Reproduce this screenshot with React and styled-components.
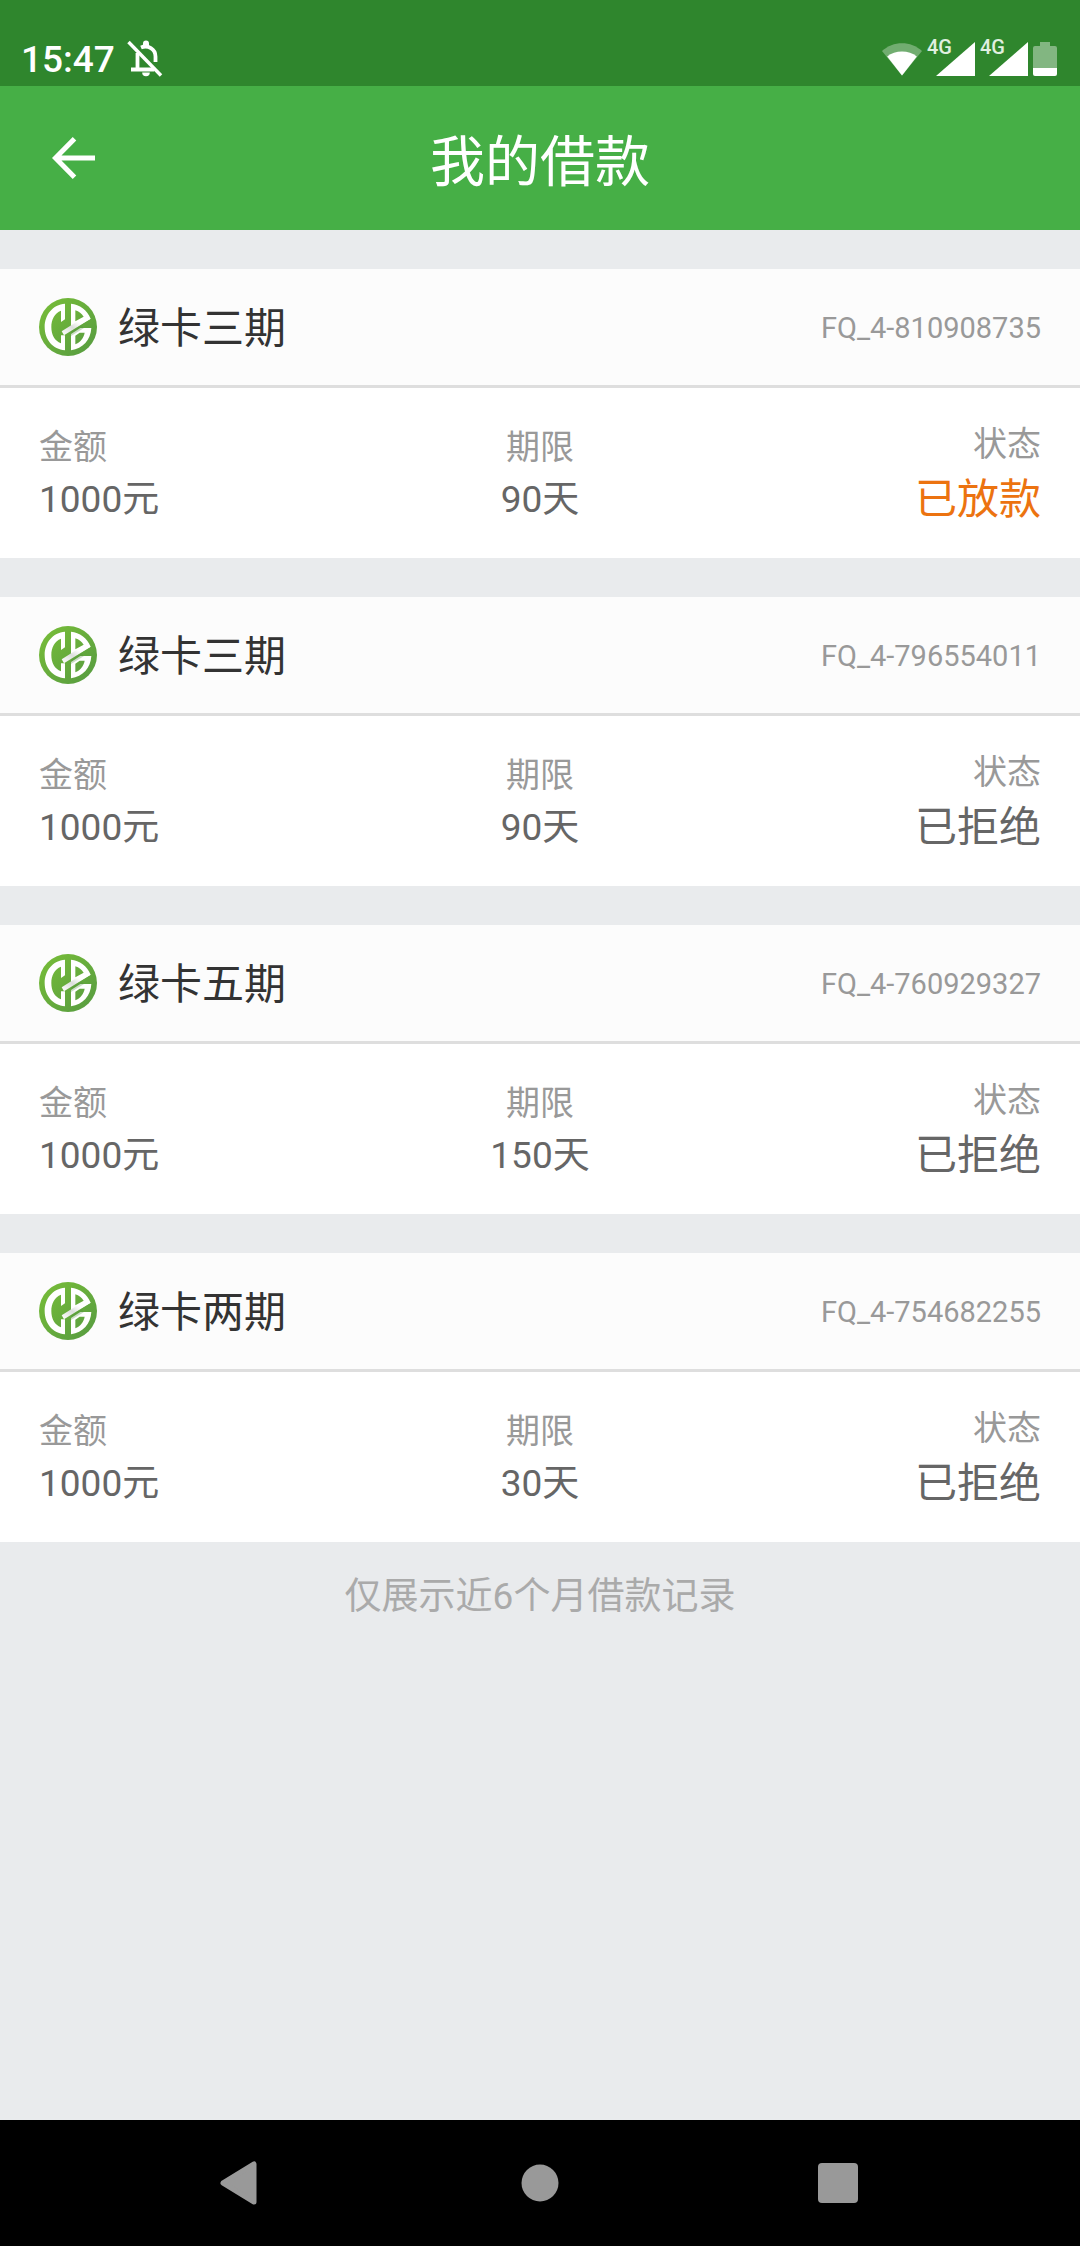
import React from "react";
import styled, { createGlobalStyle } from "styled-components";

const GlobalStyle = createGlobalStyle`
  * {
    box-sizing: border-box;
  }

  body {
    margin: 0;
    background: #e9ebed;
    font-family: Roboto, "Noto Sans CJK SC", sans-serif;
  }
`;

const LOANS = [
  { id: "FQ_4-810908735", name: "绿卡三期", amount: "1000元", term: "90天", status: "已放款", active: true },
  { id: "FQ_4-796554011", name: "绿卡三期", amount: "1000元", term: "90天", status: "已拒绝" },
  { id: "FQ_4-760929327", name: "绿卡五期", amount: "1000元", term: "150天", status: "已拒绝" },
  { id: "FQ_4-754682255", name: "绿卡两期", amount: "1000元", term: "30天", status: "已拒绝" },
];

const BellOffIcon = () => (
  <svg width="36" height="38" viewBox="0 0 36 38" fill="none" stroke="#fff">
    <path d="M1.5 2 L34 35.5" strokeWidth="3.4" />
    <path d="M10.5 13 V29 M4 29.5 H27" strokeWidth="3.8" />
    <path d="M14 7.5 C21 4.5 28.5 9 28.5 16.5 V22" strokeWidth="3.8" />
    <path d="M16 6.5 V3.5 a3 3 0 0 1 6 0 V6.5 Z" fill="#fff" stroke="none" />
    <path d="M15.2 32.5 h7.6 a3.8 3.8 0 0 1 -7.6 0 Z" fill="#fff" stroke="none" />
  </svg>
);

const WifiIcon = () => (
  <svg width="40" height="33" viewBox="0 0 40 33">
    <path d="M20 32.5 L0 8 C11 -2.5 29 -2.5 40 8 Z" fill="#fff" fillOpacity="0.32" />
    <path d="M20 32.5 L5.2 13.5 C13 6.8 27 6.8 34.8 13.5 Z" fill="#fff" />
  </svg>
);

const SignalIcon = () => (
  <svg width="39" height="34" viewBox="0 0 39 34">
    <path d="M39 0 V34 H0 Z" fill="#fff" />
  </svg>
);

const BatteryIcon = () => (
  <svg width="24" height="34" viewBox="0 0 24 34">
    <path d="M7 0 H17 V4 H22 Q24 4 24 6 V26 H0 V6 Q0 4 2 4 H7 Z" fill="#fff" fillOpacity="0.4" />
    <path d="M0 26 H24 V32 Q24 34 22 34 H2 Q0 34 0 32 Z" fill="#fff" />
  </svg>
);

const BackIcon = () => (
  <svg width="44" height="42" viewBox="0 0 44 42" fill="none" stroke="#fff" strokeWidth="5">
    <path d="M22.5 1.8 L3.5 21 L22.5 40.2 M3.5 21 H43" />
  </svg>
);

const LoanLogo = () => (
  <svg width="58" height="58" viewBox="0 0 174 174">
    <defs>
      <linearGradient id="logoGreen" x1="0" y1="0" x2="1" y2="1">
        <stop offset="0" stopColor="#79bf38" />
        <stop offset="1" stopColor="#559a41" />
      </linearGradient>
      <linearGradient id="logoShade" x1="0" y1="1" x2="1" y2="0">
        <stop offset="0" stopColor="#fff" />
        <stop offset="0.4" stopColor="#dcdfdc" />
        <stop offset="0.65" stopColor="#fff" />
      </linearGradient>
    </defs>
    <circle cx="87" cy="87" r="87" fill="url(#logoGreen)" />
    <g fill="#fff" fillRule="evenodd">
      <path d="M78 17 C41 20 17 50 17 87 C17 124 41 154 78 157 V112 H66 V136 C47 129 37 110 37 87 C37 64 47 45 66 38 V72 L78 64 Z" />
      <path d="M96 17 C122 20 144 35 155 62 L96 96 Z M109 37 V70 L134 56 C128 47 120 40 109 37 Z" />
      <path d="M96 157 V108 L124 90 H157 C155 125 132 152 96 157 Z M109 139 C124 133 134 120 137 104 H122 L109 113 Z" />
    </g>
    <path d="M96 114 L134 91 L128 82 L96 100 Z" fill="#4f9040" fillOpacity="0.3" />
    <path d="M68 100 L136 57 L155 62 L75 112 Z" fill="url(#logoShade)" />
  </svg>
);

const NavBackIcon = () => (
  <svg width="44" height="44" viewBox="0 0 44 44">
    <path d="M34 3 V41 L3 22 Z" fill="#999" stroke="#999" strokeWidth="5" strokeLinejoin="round" />
  </svg>
);

const NavHomeIcon = () => (
  <svg width="38" height="38" viewBox="0 0 38 38">
    <circle cx="19" cy="19" r="18.5" fill="#999" />
  </svg>
);

const NavRecentIcon = () => (
  <svg width="40" height="40" viewBox="0 0 40 40">
    <rect width="40" height="40" rx="4" fill="#999" />
  </svg>
);

const LoanCard = ({ loan }) => (
  <Card>
    <CardHeader>
      <LoanLogo />
      <CardTitle>{loan.name}</CardTitle>
      <LoanId>{loan.id}</LoanId>
    </CardHeader>
    <CardBody>
      <Field $align="left">
        <FieldLabel>金额</FieldLabel>
        <FieldValue>{loan.amount}</FieldValue>
      </Field>
      <Field $align="center">
        <FieldLabel>期限</FieldLabel>
        <FieldValue>{loan.term}</FieldValue>
      </Field>
      <Field $align="right">
        <FieldLabel>状态</FieldLabel>
        <StatusValue $active={loan.active}>{loan.status}</StatusValue>
      </Field>
    </CardBody>
  </Card>
);

const App = () => {
  return (
    <Page>
      <GlobalStyle />
      <StatusBar>
        <StatusGroup $gap={12}>
          <Clock>15:47</Clock>
          <BellOffIcon />
        </StatusGroup>
        <StatusGroup $gap={5}>
          <WifiIcon />
          <Signal>
            <NetworkType>4G</NetworkType>
            <SignalIcon />
          </Signal>
          <Signal>
            <NetworkType>4G</NetworkType>
            <SignalIcon />
          </Signal>
          <BatteryIcon />
        </StatusGroup>
      </StatusBar>
      <AppBar>
        <BackButton aria-label="返回">
          <BackIcon />
        </BackButton>
        <AppTitle>我的借款</AppTitle>
      </AppBar>
      <Content>
        {LOANS.map((loan) => (
          <LoanCard key={loan.id} loan={loan} />
        ))}
        <Notice>仅展示近6个月借款记录</Notice>
      </Content>
      <NavBar>
        <NavButton aria-label="后退">
          <NavBackIcon />
        </NavButton>
        <NavButton aria-label="主屏幕">
          <NavHomeIcon />
        </NavButton>
        <NavButton aria-label="最近任务">
          <NavRecentIcon />
        </NavButton>
      </NavBar>
    </Page>
  );
};

export default App;

const Page = styled.div`
  display: flex;
  flex-direction: column;
  min-height: 100vh;

  svg {
    display: block;
    flex-shrink: 0;
  }
`;

const StatusBar = styled.div`
  display: flex;
  justify-content: space-between;
  align-items: flex-end;
  height: 86px;
  padding: 0 23px 8px 21px;
  background: #2f862d;
`;

const StatusGroup = styled.div`
  display: flex;
  align-items: center;
  gap: ${({ $gap }) => $gap}px;
  height: 38px;
`;

const Clock = styled.span`
  padding-top: 2px;
  font-size: 37px;
  font-weight: 500;
  line-height: 38px;
  color: #fff;
`;

const Signal = styled.div`
  position: relative;
  display: flex;
  justify-content: flex-end;
  width: 48px;
`;

const NetworkType = styled.span`
  position: absolute;
  top: -5px;
  left: 0;
  font-size: 20px;
  font-weight: 500;
  line-height: 20px;
  color: #e0f0e0;
`;

const AppBar = styled.header`
  display: grid;
  grid-template-columns: 148px 1fr 148px;
  align-items: center;
  height: 144px;
  background: #46af46;
`;

const BackButton = styled.button`
  display: flex;
  align-items: center;
  height: 144px;
  padding: 0 0 0 52px;
  border: none;
  background: none;
  cursor: pointer;
`;

const AppTitle = styled.h1`
  margin: 0;
  padding-top: 8px;
  font-size: 55px;
  font-weight: 400;
  line-height: 80px;
  text-align: center;
  color: #fff;
`;

const Content = styled.main`
  display: flex;
  flex-direction: column;
  flex: 1;
  gap: 39px;
  padding-top: 39px;
`;

const Card = styled.section`
  background: #fff;
`;

const CardHeader = styled.div`
  display: flex;
  align-items: center;
  height: 119px;
  padding: 0 39px;
  border-bottom: 3px solid #dedede;
  background: #fcfcfc;
`;

const CardTitle = styled.h2`
  flex: 1;
  margin: 0 0 0 21px;
  padding-top: 4px;
  font-size: 42px;
  font-weight: 400;
  line-height: 60px;
  color: #333;
`;

const LoanId = styled.span`
  padding-top: 2px;
  font-size: 29px;
  line-height: 40px;
  color: #999;
`;

const CardBody = styled.div`
  display: grid;
  grid-template-columns: repeat(3, 1fr);
  align-items: center;
  height: 170px;
  padding: 4px 39px 0;
`;

const Field = styled.div`
  text-align: ${({ $align }) => $align};
`;

const FieldLabel = styled.div`
  font-size: 34px;
  line-height: 50px;
  color: #999;
`;

const FieldValue = styled.div`
  font-size: 37px;
  line-height: 56px;
  color: #666;
`;

const StatusValue = styled.div`
  font-size: 42px;
  line-height: 62px;
  color: ${({ $active }) => ($active ? "#ec7310" : "#666")};
`;

const Notice = styled.p`
  margin: -11px 0 0;
  font-size: 37px;
  line-height: 54px;
  text-align: center;
  color: #aaa;
`;

const NavBar = styled.nav`
  display: flex;
  justify-content: center;
  align-items: center;
  gap: 150px;
  height: 126px;
  background: #000;
`;

const NavButton = styled.button`
  display: flex;
  justify-content: center;
  align-items: center;
  width: 148px;
  height: 126px;
  padding: 0;
  border: none;
  background: none;
  cursor: pointer;
`;
